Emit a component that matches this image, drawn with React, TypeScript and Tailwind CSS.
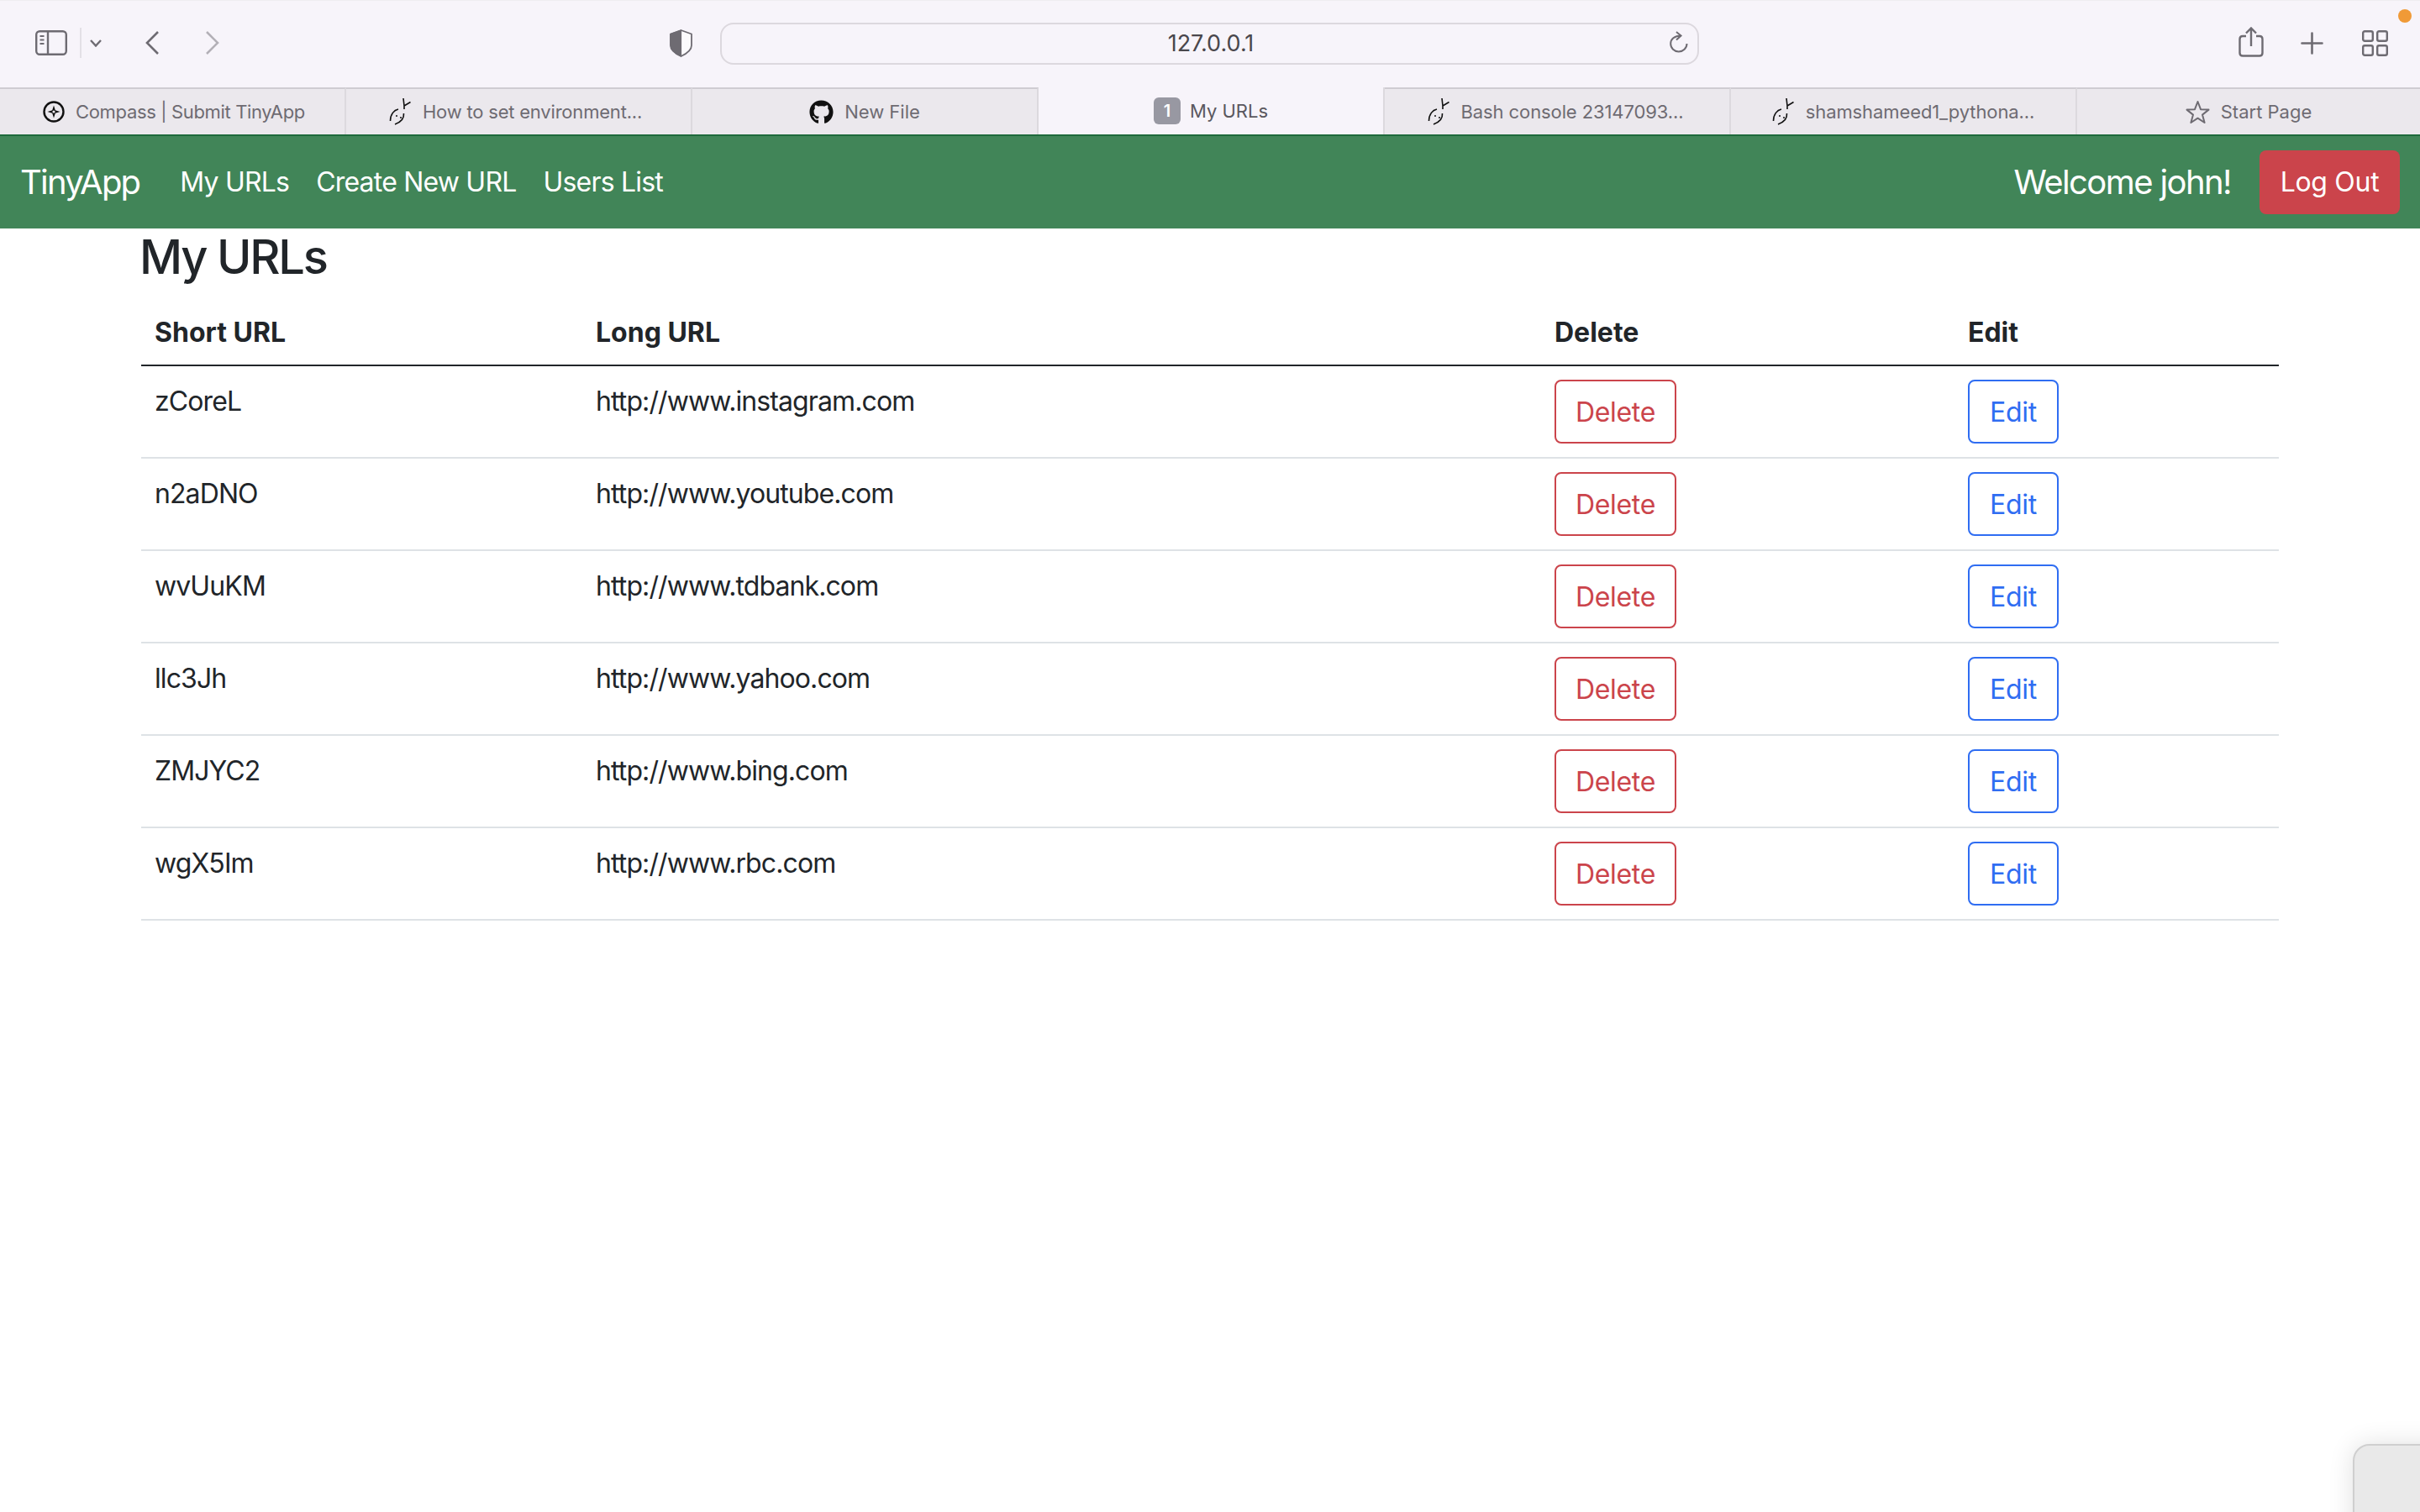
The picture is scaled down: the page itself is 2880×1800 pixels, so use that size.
import React from "react";
import { FaGithub } from "react-icons/fa";

const Bird = () => (
  <svg width="27" height="32" viewBox="0 0 27 32" fill="none" stroke="#111" strokeWidth="1.6" className="shrink-0">
    <path d="M17 0 L18 9 M25.5 4.5 L18 9 M18 9 L18 13" />
    <path d="M17.5 18 C18 23 15 28 7 31" />
    <path d="M11 13 C6 14 1.5 19 1.5 27" />
    <circle cx="9" cy="21" r="1" fill="#111" stroke="none" />
    <circle cx="14" cy="23" r="1" fill="#111" stroke="none" />
  </svg>
);

const Compass = () => (
  <svg width="26" height="26" viewBox="0 0 26 26" fill="none" className="shrink-0">
    <circle cx="13" cy="13" r="11.5" stroke="#111" strokeWidth="2.4" />
    <path d="M13 5.5 L14.8 11.2 L20.5 13 L14.8 14.8 L13 20.5 L11.2 14.8 L5.5 13 L11.2 11.2 Z" fill="#111" />
    <circle cx="13" cy="13" r="1.6" fill="#ebe8ed" />
  </svg>
);

const StarIcon = () => (
  <svg width="29" height="29" viewBox="0 0 29 29" fill="none" stroke="#6e6b72" strokeWidth="2" strokeLinejoin="round" className="shrink-0">
    <path d="M14.5 2 L18 11.2 L27.5 11.6 L20 17.6 L22.6 27 L14.5 21.7 L6.4 27 L9 17.6 L1.5 11.6 L11 11.2 Z" />
  </svg>
);

type Tab = { icon: React.ReactNode; label: string; active?: boolean; labelClass?: string; boxClass?: string };

const tabs: Tab[] = [
  { icon: <Compass />, label: "Compass | Submit TinyApp", labelClass: "tracking-[-0.35px]", boxClass: "pl-1" },
  { icon: <Bird />, label: "How to set environment...", labelClass: "tracking-[-0.2px]", boxClass: "pr-[7px]" },
  { icon: <FaGithub className="shrink-0 text-[29px] text-[#111]" />, label: "New File" },
  {
    icon: (
      <span className="flex h-8 w-8 shrink-0 items-center justify-center rounded-md bg-[#9898a2] text-[20px] font-semibold text-white">
        1
      </span>
    ),
    label: "My URLs",
    active: true,
  },
  { icon: <Bird />, label: "Bash console 23147093...", labelClass: "tracking-[-0.1px]", boxClass: "pr-1" },
  { icon: <Bird />, label: "shamshameed1_pythona...", labelClass: "tracking-[-0.1px]" },
  { icon: <StarIcon />, label: "Start Page" },
];

const rows = [
  ["zCoreL", "http://www.instagram.com"],
  ["n2aDNO", "http://www.youtube.com"],
  ["wvUuKM", "http://www.tdbank.com"],
  ["llc3Jh", "http://www.yahoo.com"],
  ["ZMJYC2", "http://www.bing.com"],
  ["wgX5Im", "http://www.rbc.com"],
];

function Toolbar() {
  return (
    <div className="relative flex h-[104px] items-center border-t border-[#efedf1] bg-[#f7f4fa] pb-px text-[#6e6b72]">
      <div className="-mt-0.5 ml-[42px] flex items-center">
        <svg width="38" height="30" viewBox="0 0 38 30" fill="none" stroke="#6e6b72" strokeWidth="2.4">
          <rect x="1.2" y="1.2" width="35.6" height="27.6" rx="4" />
          <path d="M15 1.2 V28.8" />
          <path d="M5.5 7 H10.5 M5.5 11.5 H10.5 M5.5 16 H10.5" strokeWidth="2" />
        </svg>
        <div className="ml-[15px] h-9 w-0.5 bg-[#e3e0e6]" />
        <svg className="ml-[10px]" width="14" height="9" viewBox="0 0 14 9" fill="none" stroke="#6e6b72" strokeWidth="2.4">
          <path d="M1 1 L7 7.5 L13 1" />
        </svg>
        <svg className="ml-[52px]" width="16" height="28" viewBox="0 0 16 28" fill="none" stroke="#6e6b72" strokeWidth="2.6">
          <path d="M15 1 L2 14 L15 27" />
        </svg>
        <svg className="ml-[56px]" width="16" height="28" viewBox="0 0 16 28" fill="none" stroke="#b3b0b7" strokeWidth="2.6">
          <path d="M1 1 L14 14 L1 27" />
        </svg>
      </div>
      <svg className="-mt-0.5 ml-[536px]" width="27" height="33" viewBox="0 0 27 33" fill="none">
        <path d="M13.5 1 L26 5.5 V19 C26 24 20 29 13.5 32 C7 29 1 24 1 19 V5.5 Z" fill="#fbfafc" stroke="#6e6b72" strokeWidth="1.8" strokeLinejoin="round" />
        <path d="M13.5 1 L1 5.5 V19 C1 24 7 29 13.5 32 Z" fill="#6e6b72" stroke="#6e6b72" strokeWidth="1.2" strokeLinejoin="round" />
      </svg>
      <div className="relative ml-[33px] flex h-[50px] w-[1165px] items-center justify-center rounded-2xl border-2 border-[#dcd8de] bg-[#f7f4fa] text-[27px] text-[#49474c]">
        <span className="ml-[3px]">127.0.0.1</span>
        <svg className="absolute right-[9px] top-[8px]" width="24" height="26" viewBox="0 0 24 26" fill="none" stroke="#6e6b72" strokeWidth="2">
          <path d="M20.5 15 C20.5 20.3 16 24.5 10.8 24.5 C5.5 24.5 1.2 20.3 1.2 15 C1.2 9.7 5.5 5.5 13.5 5.5" />
          <path d="M8 1 L13.5 5.5 L8 10.5" />
        </svg>
      </div>
      <div className="-mt-0.5 ml-auto mr-[38px] flex items-center">
        <svg className="-mt-0.5" width="30" height="36" viewBox="0 0 30 36" fill="none" stroke="#6e6b72" strokeWidth="2.4">
          <path d="M9 11 H5 C3 11 1.5 12.5 1.5 14.5 V31 C1.5 33 3 34.5 5 34.5 H25 C27 34.5 28.5 33 28.5 31 V14.5 C28.5 12.5 27 11 25 11 H21" />
          <path d="M15 23 V2 M9 7.5 L15 1.5 L21 7.5" />
        </svg>
        <svg className="ml-[44px]" width="27" height="27" viewBox="0 0 27 27" fill="none" stroke="#6e6b72" strokeWidth="2.6" strokeLinecap="round">
          <path d="M13.5 1.5 V25.5 M1.5 13.5 H25.5" />
        </svg>
        <svg className="ml-[46px]" width="31" height="31" viewBox="0 0 31 31" fill="none" stroke="#6e6b72" strokeWidth="2.4">
          <rect x="1.2" y="1.2" width="11.6" height="11.6" rx="2" />
          <rect x="18.2" y="1.2" width="11.6" height="11.6" rx="2" />
          <rect x="1.2" y="18.2" width="11.6" height="11.6" rx="2" />
          <rect x="18.2" y="18.2" width="11.6" height="11.6" rx="2" />
        </svg>
      </div>
      <span className="absolute right-[10px] top-[10px] h-4 w-4 rounded-full bg-[#f09a37]" />
    </div>
  );
}

function TabBar() {
  return (
    <div className="grid h-14 grid-cols-[repeat(6,412px)_1fr]">
      {tabs.map((t, i) => (
        <div
          key={i}
          className={`${
            t.active
              ? "flex items-center justify-center gap-[11px] border-r-2 border-r-[#dcd9de] bg-[#f7f4fa] text-[22px] text-[#5a585e]"
              : "flex items-center justify-center gap-[13px] border-r-2 border-t-2 border-r-[#dcd9de] border-t-[#cfccd2] bg-[#ebe8ed] text-[22px] text-[#6e6b72] last:border-r-0"
          } ${t.boxClass ?? ""}`}
        >
          {t.icon}
          <span className={`whitespace-nowrap ${t.labelClass ?? ""}`}>{t.label}</span>
        </div>
      ))}
    </div>
  );
}

function Navbar() {
  return (
    <nav className="flex h-28 items-center border-t-2 border-[#1f6a3c] bg-[#418558] pl-6 pr-6 text-white">
      <span className="text-[40px] tracking-[-1.8px]">TinyApp</span>
      <div className="ml-[48px] flex gap-8 text-[32px] tracking-[-0.8px]">
        <span>My URLs</span>
        <span>Create New URL</span>
        <span>Users List</span>
      </div>
      <span className="ml-auto text-[40px] tracking-[-1.6px]">Welcome john!</span>
      <button className="ml-[34px] h-[76px] w-[167px] rounded-lg bg-[#cb444b] text-[32px] tracking-[-0.3px] text-white">Log Out</button>
    </nav>
  );
}

function UrlTable() {
  return (
    <main className="px-[168px] text-[#212529]">
      <h1 className="-ml-0.5 mb-[13px] text-[56px] font-medium leading-[69px] tracking-[-2.2px]">My URLs</h1>
      <table className="w-full table-fixed border-collapse text-[32px] leading-[48px]">
        <colgroup>
          <col className="w-[525px]" />
          <col className="w-[1141px]" />
          <col className="w-[492px]" />
          <col className="w-[386px]" />
        </colgroup>
        <thead>
          <tr className="border-b-2 border-[#212529] text-left">
            <th className="px-4 pb-[14px] pt-[18px] font-bold">Short URL</th>
            <th className="px-4 pb-[14px] pt-[18px] font-bold">Long URL</th>
            <th className="px-4 pb-[14px] pt-[18px] font-bold">Delete</th>
            <th className="px-4 pb-[14px] pt-[18px] font-bold">Edit</th>
          </tr>
        </thead>
        <tbody>
          {rows.map(([s, l]) => (
            <tr key={s} className="border-b-2 border-[#dee2e6]">
              <td className="px-4 pb-4 pt-[18px] align-top tracking-[-0.9px]">{s}</td>
              <td className="px-4 pb-4 pt-[18px] align-top tracking-[-0.9px]">{l}</td>
              <td className="p-4 align-top">
                <button className="block h-[76px] w-[145px] rounded-lg border-2 border-[#cb444b] pt-0.5 tracking-[-0.3px] text-[#cb444b]">Delete</button>
              </td>
              <td className="p-4 align-top">
                <button className="block h-[76px] w-[108px] rounded-lg border-2 border-[#2f6df2] pt-0.5 tracking-[-0.3px] text-[#2f6df2]">Edit</button>
              </td>
            </tr>
          ))}
        </tbody>
      </table>
    </main>
  );
}

export default function App() {
  return (
    <div className="relative h-[1800px] w-[2880px] overflow-hidden bg-white font-['Inter',sans-serif]">
      <Toolbar />
      <TabBar />
      <Navbar />
      <UrlTable />
      <div className="absolute left-[2800px] top-[1719px] h-[120px] w-[120px] rounded-[20px] border-2 border-[#cfcfcf] bg-[#e9e9e9] shadow-[0_0_30px_rgba(0,0,0,0.12)]" />
    </div>
  );
}
